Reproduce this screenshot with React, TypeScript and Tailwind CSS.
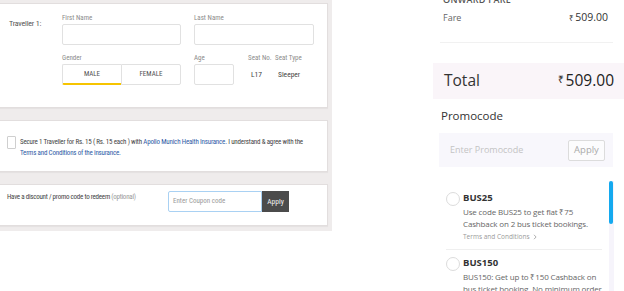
const label = 'text-[7px] leading-[9px] text-[#8c8c8c] whitespace-nowrap';

function Field({ name, className }: { name: string; className: string }) {
  return (
    <div className={className}>
      <div className={label}>{name}</div>
      <div className="mt-px h-[21px] rounded-[2px] border border-[#e1e1e1] bg-white" />
    </div>
  );
}

type Offer = { code: string; lines: string[]; terms: boolean; first: boolean };

const offers: Offer[] = [
  {
    code: 'BUS25',
    lines: ['Use code BUS25 to get flat ₹75', 'Cashback on 2 bus ticket bookings.'],
    terms: true,
    first: true,
  },
  {
    code: 'BUS150',
    lines: ['BUS150: Get up to ₹150 Cashback on', 'bus ticket booking. No minimum order', 'value required.'],
    terms: true,
    first: false,
  },
];

function OfferRow({ offer }: { offer: Offer }) {
  return (
    <div className={offer.first ? 'flex border-b border-[#efefef] pt-[10px] pb-[7px]' : 'flex pt-[6px] pb-[7px]'}>
      <span className="mt-px h-[14px] w-[14px] shrink-0 rounded-full border border-[#dcdcdc] bg-white" />
      <div className="ml-[3px]">
        <div className="text-[9.5px] font-bold leading-[14px] text-[#333]">{offer.code}</div>
        <div className="mt-px text-[8px] leading-[12px] tracking-[-0.15px] whitespace-nowrap text-[#666]">
          {offer.lines.map((l) => (
            <div key={l}>{l}</div>
          ))}
        </div>
        {offer.terms && (
          <div className="mt-[2px] flex items-center gap-[3px] text-[6.5px] leading-[10px] text-[#9a9a9a]">
            Terms and Conditions
            <svg width="4" height="6" viewBox="0 0 4 6" fill="none">
              <path d="M1 0.8 3.1 3 1 5.2" stroke="#9a9a9a" strokeWidth="0.8" />
            </svg>
          </div>
        )}
      </div>
    </div>
  );
}

export default function App() {
  return (
    <div className="flex h-[291px] w-[624px] overflow-hidden bg-white">
      {/* left: passenger form */}
      <div className="flex h-[231px] w-[332px] shrink-0 flex-col gap-[12px] bg-[#efecec] pt-[3px] pr-[4px] font-['Roboto_Condensed','Liberation_Sans',sans-serif]">
        <div className="flex h-[105px] border border-l-0 border-[#e2dede] bg-white shadow-[0_1px_1px_rgba(0,0,0,0.04)]">
          <div className="w-[62px] shrink-0 pt-[15px] pl-[9px] text-[8px] leading-[10px] tracking-[-0.2px] text-[#555]">Traveller 1:</div>
          <div className="flex flex-col pt-[10px]">
            <div className="flex gap-[13px]">
              <Field name="First Name" className="w-[119px]" />
              <Field name="Last Name" className="w-[120px]" />
            </div>
            <div className="mt-[9px] flex">
              <div className="w-[119px]">
                <div className={label}>Gender</div>
                <div className="mt-px flex h-[21px] text-[7px] text-[#555]">
                  <div className="flex w-[59px] items-center justify-center rounded-l-[2px] border border-r-0 border-b-2 border-[#e1e1e1] border-b-[#f6c400]">
                    MALE
                  </div>
                  <div className="flex flex-1 items-center justify-center rounded-r-[2px] border border-[#e1e1e1]">FEMALE</div>
                </div>
              </div>
              <Field name="Age" className="ml-[13px] w-[40px]" />
              <div className="ml-[14px] w-[27px]">
                <div className={label}>Seat No.</div>
                <div className="mt-px flex h-[21px] items-center pl-[3px] text-[7.5px] text-[#444]">L17</div>
              </div>
              <div>
                <div className={label}>Seat Type</div>
                <div className="mt-px flex h-[21px] items-center pl-[3px] text-[7.5px] text-[#444]">Sleeper</div>
              </div>
            </div>
          </div>
        </div>

        <div className="flex h-[52px] items-start border border-l-0 border-[#e2dede] bg-white pt-[15px] pl-[7px] shadow-[0_1px_1px_rgba(0,0,0,0.04)]">
          <span className="h-[13px] w-[9px] shrink-0 rounded-[1px] border border-[#cfcfcf]" />
          <p className="ml-[4px] pt-px text-[7px] leading-[11px] tracking-[-0.2px] whitespace-nowrap text-[#444]">
            Secure 1 Traveller for Rs. 15 ( Rs. 15 each ) with{' '}
            <span className="text-[#2f5ca6]">Apollo Munich Health Insurance.</span> I understand &amp; agree with the
            <br />
            <span className="text-[#2f5ca6]">Terms and Conditions of the insurance.</span>
          </p>
        </div>

        <div className="flex h-[42px] items-start border border-l-0 border-[#e2dede] bg-white pt-[6px] pl-[7px] shadow-[0_1px_1px_rgba(0,0,0,0.04)]">
          <div className="w-[161px] shrink-0 pt-[2px] text-[7px] leading-[9px] tracking-[-0.25px] whitespace-nowrap text-[#444]">
            Have a discount / promo code to redeem <span className="text-[#999]">(optional)</span>
          </div>
          <div className="flex h-[21px] w-[94px] items-center rounded-l-[2px] border border-[#a9d1f3] pl-[4px] text-[7px] text-[#9a9a9a]">
            Enter Coupon code
          </div>
          <div className="flex h-[21px] w-[27px] items-center justify-center bg-[#4b4b4b] text-[7.5px] text-[#f2f2f2]">Apply</div>
        </div>
      </div>

      {/* right: fare summary */}
      <div className="ml-[101px] flex w-[191px] shrink-0 flex-col font-['Open_Sans',sans-serif]">
        <div className="mr-[11px] ml-[7px] border-b border-[#f1f1f1] pr-[5px] pb-[18px] pl-[3px]">
          <div className="-mt-[6px] text-[9px] leading-[12px] font-semibold tracking-[0.3px] text-[#555]">ONWARD FARE</div>
          <div className="mt-[5px] flex items-center justify-between leading-[12px]">
            <span className="text-[9px] text-[#666]">Fare</span>
            <span className="text-[10.5px] text-[#333]">
              <span className="mr-px text-[8px]">₹</span>509.00
            </span>
          </div>
        </div>

        <div className="mt-[20px] flex h-[36px] shrink-0 items-center justify-between bg-[#faf5f9] pr-[10px] pl-[11px]">
          <span className="text-[15.5px] text-[#333]">Total</span>
          <span className="text-[15.5px] text-[#222]">
            <span className="mr-[2px] align-[3px] text-[10px]">₹</span>509.00
          </span>
        </div>

        <div className="mt-[9px] pl-[8px] text-[11.5px] leading-[16px] text-[#333]">Promocode</div>

        <div className="mt-[9px] ml-[6px] flex h-[34px] w-[174px] shrink-0 items-center justify-between bg-[#f8f7fc] pr-[8px] pl-[11px]">
          <span className="text-[9px] text-[#c4c4c4]">Enter Promocode</span>
          <span className="flex h-[21px] w-[37px] items-center justify-center rounded-[2px] border border-[#dcdcdc] bg-[#fcfcfd] text-[9.5px] text-[#aaa]">
            Apply
          </span>
        </div>

        <div className="mt-[14px] flex flex-1 pl-[13px]">
          <div className="w-[156px] shrink-0">
            {offers.map((o) => (
              <OfferRow key={o.code} offer={o} />
            ))}
          </div>
          <div className="ml-[7px] w-[5px] bg-[#f6f4fb]">
            <div className="h-[43px] w-[3.5px] rounded-full bg-[#14a9ef]" />
          </div>
        </div>
      </div>
    </div>
  );
}
